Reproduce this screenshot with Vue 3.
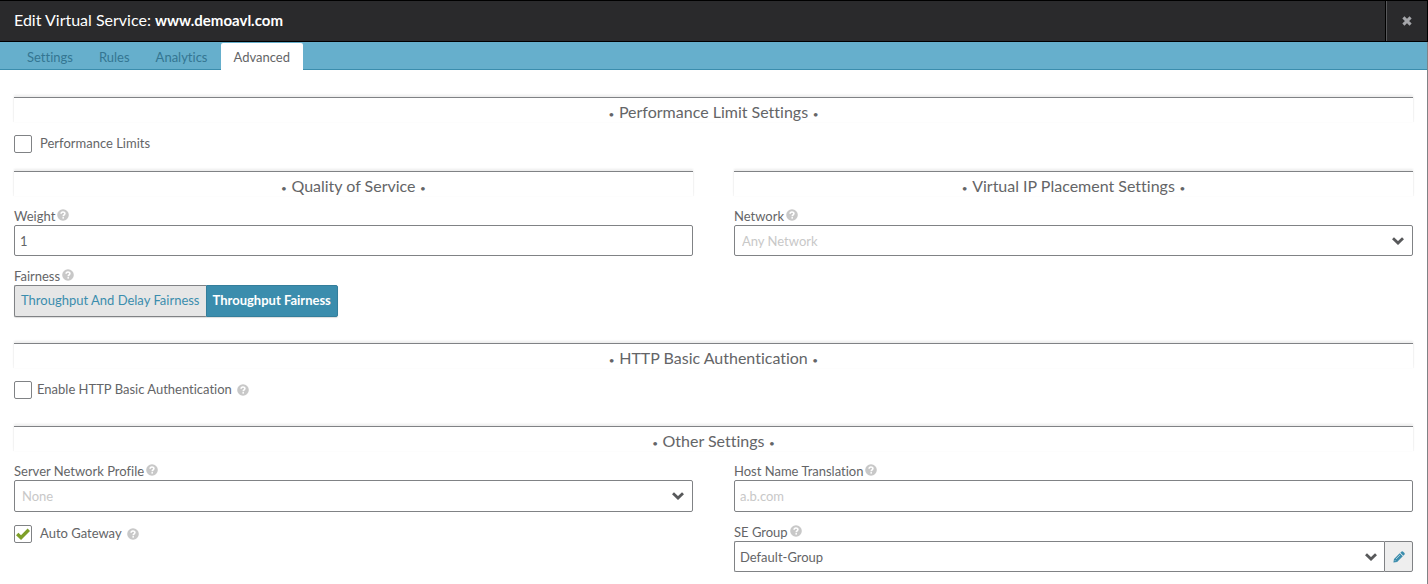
<script setup>
import { h, ref } from 'vue'

const tabs = ['Settings', 'Rules', 'Analytics', 'Advanced']
const activeTab = ref('Advanced')

const fairnessOptions = ['Throughput And Delay Fairness', 'Throughput Fairness']
const fairness = ref('Throughput Fairness')

const performanceLimits = ref(false)
const basicAuth = ref(false)
const autoGateway = ref(true)
const weight = ref('1')
const network = ref('')
const profile = ref('')
const hostName = ref('')
const seGroup = ref('Default-Group')

const HelpIcon = () =>
  h('svg', { class: 'help', viewBox: '0 0 12 12', 'aria-hidden': 'true' }, [
    h('circle', { cx: 6, cy: 6, r: 5.8, fill: '#c8c8c8' }),
    h('path', {
      d: 'M4.1 4.7C4.1 2.4 7.9 2.4 7.9 4.6C7.9 5.8 6.2 5.8 6.2 7.2',
      fill: 'none',
      stroke: '#fff',
      'stroke-width': 1.6
    }),
    h('rect', { x: 5.4, y: 8.1, width: 1.6, height: 1.5, fill: '#fff' })
  ])

const Chevron = () =>
  h('svg', { class: 'chevron', viewBox: '0 0 12 8', 'aria-hidden': 'true' }, [
    h('path', { d: 'M1 1.2L6 6L11 1.2', fill: 'none', stroke: '#58595b', 'stroke-width': 2.8 })
  ])
</script>

<template>
  <div class="dialog">
    <header class="titlebar">
      <h1>Edit Virtual Service: <strong>www.demoavl.com</strong></h1>
      <button class="close" type="button" aria-label="Close">
        <svg viewBox="0 0 10 10" aria-hidden="true">
          <path d="M1.4 1.4L8.6 8.6M8.6 1.4L1.4 8.6" fill="none" stroke="#a5a6aa" stroke-width="3" />
        </svg>
      </button>
    </header>

    <nav class="tabs">
      <button
        v-for="tab in tabs"
        :key="tab"
        type="button"
        class="tab"
        :class="{ active: tab === activeTab }"
        @click="activeTab = tab"
      >{{ tab }}</button>
    </nav>

    <main class="content">
      <section class="limits">
        <h2>• <span>Performance Limit Settings</span> •</h2>
        <label class="check">
          <span class="box">
            <input v-model="performanceLimits" type="checkbox">
            <svg viewBox="0 0 14 12" aria-hidden="true"><path d="M1.2 6L5 9.6L12.8 1.8" /></svg>
          </span>
          <span class="caption">Performance Limits</span>
        </label>
      </section>

      <div class="columns">
        <section>
          <h2>• <span>Quality of Service</span> •</h2>
          <div class="field">
            <div class="label"><label for="weight">Weight</label><HelpIcon /></div>
            <input id="weight" v-model="weight" class="control" type="text">
          </div>
          <div class="field">
            <div id="fairness" class="label">Fairness<HelpIcon /></div>
            <div class="segments" role="group" aria-labelledby="fairness">
              <button
                v-for="option in fairnessOptions"
                :key="option"
                type="button"
                :class="{ on: option === fairness }"
                :aria-pressed="option === fairness"
                @click="fairness = option"
              >{{ option }}</button>
            </div>
          </div>
        </section>
        <section>
          <h2>• <span>Virtual IP Placement Settings</span> •</h2>
          <div class="field">
            <div class="label"><label for="network">Network</label><HelpIcon /></div>
            <div class="select">
              <select id="network" v-model="network" class="control" :class="{ empty: !network }">
                <option value="">Any Network</option>
              </select>
              <Chevron />
            </div>
          </div>
        </section>
      </div>

      <section class="auth">
        <h2>• <span>HTTP Basic Authentication</span> •</h2>
        <label class="check tight">
          <span class="box">
            <input v-model="basicAuth" type="checkbox">
            <svg viewBox="0 0 14 12" aria-hidden="true"><path d="M1.2 6L5 9.6L12.8 1.8" /></svg>
          </span>
          <span class="caption">Enable HTTP Basic Authentication</span>
          <HelpIcon />
        </label>
      </section>

      <section>
        <h2>• <span>Other Settings</span> •</h2>
        <div class="columns">
          <div>
            <div class="field">
              <div class="label"><label for="profile">Server Network Profile</label><HelpIcon /></div>
              <div class="select">
                <select id="profile" v-model="profile" class="control tall" :class="{ empty: !profile }">
                  <option value="">None</option>
                </select>
                <Chevron />
              </div>
            </div>
            <label class="check">
              <span class="box">
                <input v-model="autoGateway" type="checkbox">
                <svg viewBox="0 0 14 12" aria-hidden="true"><path d="M1.2 6L5 9.6L12.8 1.8" /></svg>
              </span>
              <span class="caption">Auto Gateway</span>
              <HelpIcon />
            </label>
          </div>
          <div>
            <div class="field">
              <div class="label"><label for="host">Host Name Translation</label><HelpIcon /></div>
              <input id="host" v-model="hostName" class="control tall" type="text" placeholder="a.b.com">
            </div>
            <div class="field">
              <div class="label"><label for="group">SE Group</label><HelpIcon /></div>
              <div class="combo">
                <div class="select">
                  <select id="group" v-model="seGroup" class="control">
                    <option>Default-Group</option>
                  </select>
                  <Chevron />
                </div>
                <button class="edit" type="button" aria-label="Edit SE Group">
                  <svg viewBox="0 0 12 12" aria-hidden="true">
                    <path d="M0.4 11.6L1 7.9L6.7 2.2L9.8 5.3L4.1 11Z" fill="#3b8dad" />
                    <path d="M7.3 1.7L8.6 0.5Q9.3 0 9.9 0.5L11.5 2.1Q12 2.7 11.5 3.4L10.3 4.7Z" fill="#3b8dad" />
                    <path d="M3 8L6.9 4.1M1.8 9.2L2.8 10.2" fill="none" stroke="#eee" stroke-width="0.6" />
                  </svg>
                </button>
              </div>
            </div>
          </div>
        </div>
      </section>
    </main>
  </div>
</template>

<style>
body {
  margin: 0;
  background: #fff;
}
</style>

<style scoped>
.dialog {
  font-family: Lato, "Open Sans", sans-serif;
  font-size: 13px;
  font-variant-ligatures: none;
  line-height: 18px;
  color: #646567;
}
.dialog * {
  box-sizing: border-box;
}
button,
input,
select {
  margin: 0;
  font: inherit;
  font-variant-ligatures: none;
  color: inherit;
}
.titlebar {
  display: flex;
  align-items: stretch;
  height: 42px;
  border: 1px solid #000;
  border-left: 0;
  background: #2a2a2c;
  color: #fff;
}
h1 {
  flex: 1;
  margin: 0;
  padding-left: 14px;
  font-size: 16px;
  font-weight: 400;
  line-height: 38px;
}
h1 strong {
  font-size: 15px;
}
.close {
  display: flex;
  align-items: center;
  justify-content: center;
  width: 41px;
  padding: 0;
  border: 0;
  border-left: 1px solid #58595b;
  background: none;
  box-shadow: -1px 0 #000;
}
.close svg {
  width: 10px;
  height: 10px;
}
.tabs {
  display: flex;
  align-items: stretch;
  height: 28px;
  padding: 1px 14px 0;
  border-right: 1px solid #808285;
  background: #66afcc;
  box-shadow: inset 0 -1px #3b8dad;
}
.tab {
  padding: 0 13px;
  border: 0;
  border-radius: 2px 2px 0 0;
  background: none;
  color: #347692;
}
.tab.active {
  background: #fff;
  color: #646567;
}
.content {
  padding: 27px 14px 12px;
  border-right: 1px solid #808285;
}
h2 {
  height: 25px;
  margin: 0;
  border-top: 1px solid #808285;
  box-shadow: 0 -2px 2px #ededed, -1px 0 1px #f6f6f6, 1px 0 1px #f6f6f6;
  font-size: 10px;
  font-weight: 400;
  line-height: 28px;
  text-align: center;
}
h2 span {
  padding: 0 2px;
  font-size: 16px;
}
.columns {
  display: grid;
  grid-template-columns: 1fr 1fr;
  column-gap: 41px;
}
.limits {
  padding-bottom: 18px;
}
.auth {
  padding: 26px 0 27px;
}
.field {
  padding-top: 11px;
}
.label {
  display: flex;
  align-items: center;
  height: 18px;
}
.help {
  flex: none;
  width: 12px;
  height: 12px;
}
.label .help {
  margin: 0 0 3px 2px;
}
.check {
  display: flex;
  align-items: center;
  gap: 8px;
  width: fit-content;
  margin-top: 13px;
}
.caption {
  height: 18px;
  line-height: 16px;
}
.check .help {
  margin-left: -3px;
}
.check.tight {
  gap: 5px;
}
.check.tight .help {
  margin-left: 0;
}
.box {
  display: grid;
  place-items: center;
  width: 18px;
  height: 18px;
}
.box input {
  grid-area: 1 / 1;
  width: 18px;
  height: 18px;
  border: 1px solid #808285;
  border-radius: 2px;
  background: #fff;
  appearance: none;
}
.box svg {
  grid-area: 1 / 1;
  width: 14px;
  height: 12px;
  visibility: hidden;
  pointer-events: none;
  z-index: 1;
}
.box path {
  fill: none;
  stroke: #7d9f28;
  stroke-width: 3.4;
}
.box input:checked + svg {
  visibility: visible;
}
.control {
  display: block;
  width: 100%;
  height: 31px;
  padding: 0 5px;
  border: 1px solid #808285;
  border-radius: 2px;
  background: #fff;
  appearance: none;
}
.control.tall {
  height: 32px;
}
.control::placeholder,
.control.empty {
  color: #c8c8c8;
}
.control::placeholder {
  opacity: 1;
}
.control.empty {
  padding-left: 7px;
}
.select {
  display: grid;
  flex: 1;
  align-items: center;
}
.select .control,
.chevron {
  grid-area: 1 / 1;
}
.chevron {
  justify-self: end;
  width: 12px;
  height: 8px;
  margin-right: 9px;
  pointer-events: none;
  z-index: 1;
}
.segments {
  display: flex;
  width: fit-content;
}
.segments button {
  height: 32px;
  padding: 0 6px 2px;
  border: 1px solid #808285;
  border-right: 0;
  border-radius: 2px 0 0 2px;
  background: #e6e6e6;
  box-shadow: 0 1px 1px #ddd;
  color: #3b8dad;
}
.segments button:last-child {
  border-right: 1px solid #808285;
  border-radius: 0 2px 2px 0;
}
.segments button.on {
  border-color: #347e9b;
  background: #3b8dad;
  color: #fff;
  font-weight: 700;
}
.combo {
  display: flex;
}
.combo .control {
  border-right: 0;
  border-radius: 2px 0 0 2px;
}
.edit {
  display: flex;
  align-items: center;
  justify-content: center;
  width: 29px;
  padding: 0;
  border: 1px solid #808285;
  border-radius: 0 2px 2px 0;
  background: #eee;
}
.edit svg {
  width: 12px;
  height: 12px;
}
.combo .chevron {
  margin-right: 7px;
}
</style>
